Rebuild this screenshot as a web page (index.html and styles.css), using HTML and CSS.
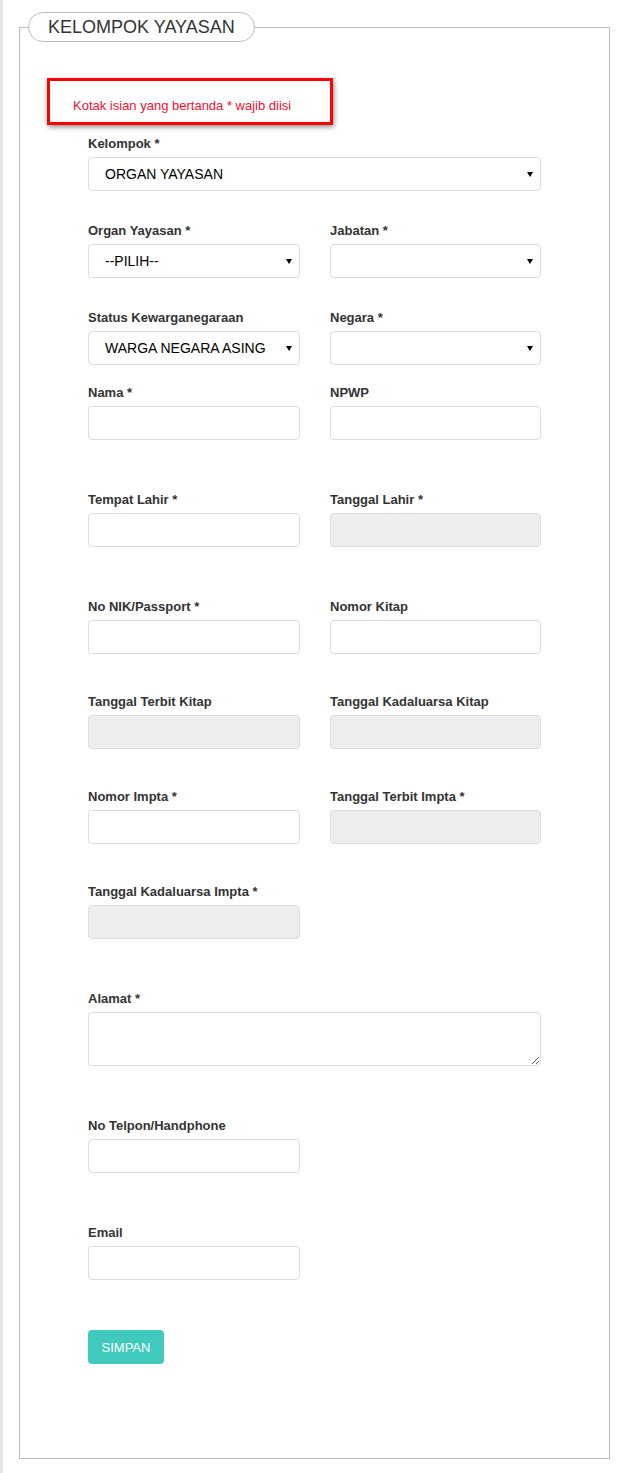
FILE: index.html
```html
<html>
	<head>
		<title>Kelompok Yayasan</title>
		<link rel="stylesheet" href="styles.css">
	</head>
	<body>
		<fieldset class="kelompok">
			<legend class="judul">KELOMPOK YAYASAN</legend>
			<div class="isi">
				<div class="peringatan">Kotak isian yang bertanda * wajib diisi</div>

				<div class="form">
					<div class="baris satu">
						<div class="grup">
							<label>Kelompok *</label>
							<div class="pilih">
								<select class="kotak"><option>ORGAN YAYASAN</option></select>
							</div>
						</div>
					</div>

					<div class="baris mt-31">
						<div class="grup">
							<label>Organ Yayasan *</label>
							<div class="pilih">
								<select class="kotak"><option>--PILIH--</option></select>
							</div>
						</div>
						<div class="grup">
							<label>Jabatan *</label>
							<div class="pilih">
								<select class="kotak"><option></option></select>
							</div>
						</div>
					</div>

					<div class="baris mt-31">
						<div class="grup">
							<label>Status Kewarganegaraan</label>
							<div class="pilih">
								<select class="kotak"><option>WARGA NEGARA ASING</option></select>
							</div>
						</div>
						<div class="grup">
							<label>Negara *</label>
							<div class="pilih">
								<select class="kotak"><option></option></select>
							</div>
						</div>
					</div>

					<div class="baris mt-19">
						<div class="grup">
							<label>Nama *</label>
							<input type="text" class="kotak">
						</div>
						<div class="grup">
							<label>NPWP</label>
							<input type="text" class="kotak">
						</div>
					</div>

					<div class="baris mt-51">
						<div class="grup">
							<label>Tempat Lahir *</label>
							<input type="text" class="kotak">
						</div>
						<div class="grup">
							<label>Tanggal Lahir *</label>
							<input type="text" class="kotak" disabled>
						</div>
					</div>

					<div class="baris mt-51">
						<div class="grup">
							<label>No NIK/Passport *</label>
							<input type="text" class="kotak">
						</div>
						<div class="grup">
							<label>Nomor Kitap</label>
							<input type="text" class="kotak">
						</div>
					</div>

					<div class="baris mt-39">
						<div class="grup">
							<label>Tanggal Terbit Kitap</label>
							<input type="text" class="kotak" disabled>
						</div>
						<div class="grup">
							<label>Tanggal Kadaluarsa Kitap</label>
							<input type="text" class="kotak" disabled>
						</div>
					</div>

					<div class="baris mt-39">
						<div class="grup">
							<label>Nomor Impta *</label>
							<input type="text" class="kotak">
						</div>
						<div class="grup">
							<label>Tanggal Terbit Impta *</label>
							<input type="text" class="kotak" disabled>
						</div>
					</div>

					<div class="baris mt-39">
						<div class="grup">
							<label>Tanggal Kadaluarsa Impta *</label>
							<input type="text" class="kotak" disabled>
						</div>
					</div>

					<div class="baris satu mt-51">
						<div class="grup">
							<label>Alamat *</label>
							<textarea class="kotak alamat"></textarea>
						</div>
					</div>

					<div class="baris mt-51">
						<div class="grup">
							<label>No Telpon/Handphone</label>
							<input type="text" class="kotak">
						</div>
					</div>

					<div class="baris mt-51">
						<div class="grup">
							<label>Email</label>
							<input type="text" class="kotak">
						</div>
					</div>

					<button class="simpan">SIMPAN</button>
				</div>
			</div>
		</fieldset>
	</body>
</html>
```

FILE: styles.css
```css
body{
	margin: 0;
	padding: 12px 17px 0 16px;
	border-left: 3px solid #e6e6e6;
	min-height: 1461px;
	background-color: white;
	font-family: "Liberation Sans", Arial, sans-serif;
	color: #333;
}

/*kotak besar dengan judul bulat di atas*/
.kelompok{
	margin: 0;
	padding: 0;
	border: 1px solid #bbb;
	min-width: 0;
}

.judul{
	margin-left: 8px;
	padding: 4px 19px;
	border: 1px solid #bbb;
	border-radius: 15px;
	font-size: 18px;
	line-height: 20px;
	color: #333;
}

.isi{
	padding: 36px 68px 94px 27px;
}

/*kotak merah: keterangan wajib isi*/
.peringatan{
	width: 286px;
	box-sizing: border-box;
	border: 3px solid #ff0000;
	padding: 17px 0 8px 23px;
	font-size: 13px;
	line-height: 16px;
	color: #ee1133;
	box-shadow: 1px 2px 5px rgba(0, 0, 0, 0.45);
}

.form{
	margin-top: 10px;
	padding-left: 41px;
}

.baris{
	display: grid;
	grid-template-columns: 212px 211px;
	column-gap: 30px;
}

.baris.satu{
	grid-template-columns: 453px;
}

.mt-19{ margin-top: 19px; }
.mt-31{ margin-top: 31px; }
.mt-39{ margin-top: 39px; }
.mt-51{ margin-top: 51px; }

.grup label{
	display: block;
	margin-bottom: 4px;
	font-size: 13px;
	line-height: 18px;
	font-weight: bold;
	color: #333;
}

.kotak{
	display: block;
	width: 100%;
	height: 34px;
	box-sizing: border-box;
	margin: 0;
	padding: 0 16px;
	border: 1px solid #dcdcdc;
	border-radius: 4px;
	background-color: white;
	font-family: "Liberation Sans", Arial, sans-serif;
	font-size: 14px;
	color: #000;
	outline: none;
}

.kotak:disabled{
	background-color: #eeeeee;
}

select.kotak{
	appearance: none;
	-webkit-appearance: none;
}

.pilih{
	position: relative;
}

/*panah kecil di kanan select*/
.pilih::after{
	content: "";
	position: absolute;
	right: 8px;
	top: 15px;
	border-left: 3px solid transparent;
	border-right: 3px solid transparent;
	border-top: 5px solid #000;
}

.alamat{
	height: 54px;
	padding: 6px 12px;
	resize: vertical;
}

.simpan{
	display: block;
	margin-top: 50px;
	width: 76px;
	height: 34px;
	border: none;
	border-radius: 4px;
	background-color: #40c9bc;
	color: white;
	font-family: "Liberation Sans", Arial, sans-serif;
	font-size: 13px;
	padding: 0;
}
```
